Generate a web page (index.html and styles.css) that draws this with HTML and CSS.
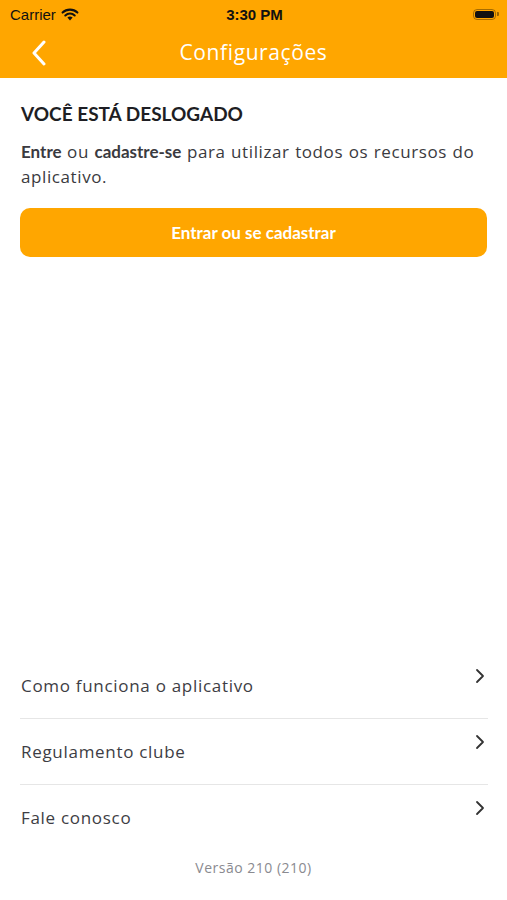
FILE: index.html
```html
<!DOCTYPE html>
<html lang="pt-BR">
<head>
    <meta charset="utf-8">
    <link rel="stylesheet" href="styles.css">
</head>
<body>
    <div id="app">
        <div class="status-bar">
            <div class="status-left">
                <span>Carrier</span>
                <svg class="wifi" width="18" height="13" viewBox="0 0 18 13">
                    <path d="M9 12.5 L6.4 9.6 A3.8 3.8 0 0 1 11.6 9.6 Z" fill="#111"/>
                    <path d="M4.3 7.4 A6.8 6.8 0 0 1 13.7 7.4" fill="none" stroke="#111" stroke-width="2.1" stroke-linecap="round"/>
                    <path d="M1.6 4.6 A10.6 10.6 0 0 1 16.4 4.6" fill="none" stroke="#111" stroke-width="2.1" stroke-linecap="round"/>
                </svg>
            </div>
            <div class="status-time">3:30 PM</div>
            <div class="status-right">
                <div class="battery"><div class="battery-level"></div></div>
                <div class="battery-tip"></div>
            </div>
        </div>
        <div class="nav-bar">
            <svg class="back" width="16" height="26" viewBox="0 0 16 26">
                <path d="M13 2 L3 13 L13 24" fill="none" stroke="#fff" stroke-width="3" stroke-linecap="round" stroke-linejoin="round"/>
            </svg>
            <div class="nav-title">Configurações</div>
        </div>

        <div class="content">
            <h1 class="logged-out-title">VOCÊ ESTÁ DESLOGADO</h1>
            <p class="logged-out-text"><b>Entre</b> ou <b>cadastre-se</b> para utilizar todos os recursos do aplicativo.</p>
            <button class="login-btn">Entrar ou se cadastrar</button>
        </div>

        <div class="menu">
            <div class="menu-item">
                <span>Como funciona o aplicativo</span>
                <svg class="chevron" width="10" height="16" viewBox="0 0 10 16"><path d="M2 2 L8 8 L2 14" fill="none" stroke="#333" stroke-width="1.8" stroke-linecap="round" stroke-linejoin="round"/></svg>
            </div>
            <div class="menu-item">
                <span>Regulamento clube</span>
                <svg class="chevron" width="10" height="16" viewBox="0 0 10 16"><path d="M2 2 L8 8 L2 14" fill="none" stroke="#333" stroke-width="1.8" stroke-linecap="round" stroke-linejoin="round"/></svg>
            </div>
            <div class="menu-item">
                <span>Fale conosco</span>
                <svg class="chevron" width="10" height="16" viewBox="0 0 10 16"><path d="M2 2 L8 8 L2 14" fill="none" stroke="#333" stroke-width="1.8" stroke-linecap="round" stroke-linejoin="round"/></svg>
            </div>
        </div>
        <div class="version">Versão 210 (210)</div>
    </div>
</body>
</html>
```

FILE: styles.css
```css
body {
    margin: 0;
    background: #ffffff;
    font-family: 'Open Sans', 'Noto Sans', sans-serif;
    color: #333333;
}

#app {
    display: flex;
    flex-direction: column;
    height: 900px;
}

.status-bar {
    background: #ffa600;
    height: 28px;
    padding: 0 8px 0 10px;
    display: flex;
    align-items: center;
    justify-content: space-between;
    font-family: 'Liberation Sans', sans-serif;
    font-size: 15px;
    color: #111111;
}

.status-left {
    flex: 1;
    display: flex;
    align-items: center;
    gap: 5px;
}

.status-time {
    font-weight: bold;
}

.status-right {
    flex: 1;
    display: flex;
    align-items: center;
    justify-content: flex-end;
}

.battery {
    width: 23px;
    height: 11px;
    border: 1px solid rgba(0, 0, 0, 0.35);
    border-radius: 4px;
    padding: 1px;
    box-sizing: border-box;
}

.battery-level {
    width: 100%;
    height: 100%;
    background: #111111;
    border-radius: 2px;
}

.battery-tip {
    width: 2px;
    height: 4px;
    margin-left: 1px;
    background: rgba(0, 0, 0, 0.4);
    border-radius: 0 1px 1px 0;
}

.nav-bar {
    background: #ffa600;
    height: 50px;
    display: flex;
    align-items: center;
    justify-content: center;
    position: relative;
}

.back {
    position: absolute;
    left: 31px;
    top: 12px;
}

.nav-title {
    color: #ffffff;
    font-size: 21px;
    font-weight: 400;
    letter-spacing: 0.6px;
    margin-top: -3px;
}

.content {
    padding: 0 20px;
    flex: 1;
}

.logged-out-title {
    font-family: 'Lato', sans-serif;
    font-weight: bold;
    font-size: 19px;
    color: #1e1e24;
    margin: 24px 0 0 1px;
}

.logged-out-text {
    font-size: 17px;
    line-height: 25px;
    letter-spacing: 0.6px;
    word-spacing: 0.5px;
    color: #3a3a40;
    margin: 14px 0 0 1px;
}

.logged-out-text b {
    display: inline-block;
    font-family: 'Lato', sans-serif;
    font-weight: bold;
    letter-spacing: 0;
}

.login-btn {
    display: block;
    width: 100%;
    height: 49px;
    margin-top: 19px;
    background: #ffa600;
    color: #ffffff;
    border: none;
    border-radius: 10px;
    font-family: 'Lato', sans-serif;
    font-weight: bold;
    font-size: 17px;
}

.menu {
    padding: 0 19px 0 20px;
}

.menu-item {
    height: 65px;
    display: flex;
    align-items: center;
    justify-content: space-between;
    font-size: 17px;
    letter-spacing: 0.7px;
    color: #3d3d44;
    padding-left: 1px;
}

.menu-item + .menu-item {
    border-top: 1px solid #e6e6e6;
}

.chevron {
    margin-right: 3px;
    margin-top: -20px;
}

.version {
    height: 50px;
    text-align: center;
    font-size: 14px;
    letter-spacing: 0.5px;
    color: #8a8a90;
    padding-top: 8px;
    box-sizing: border-box;
}
```
